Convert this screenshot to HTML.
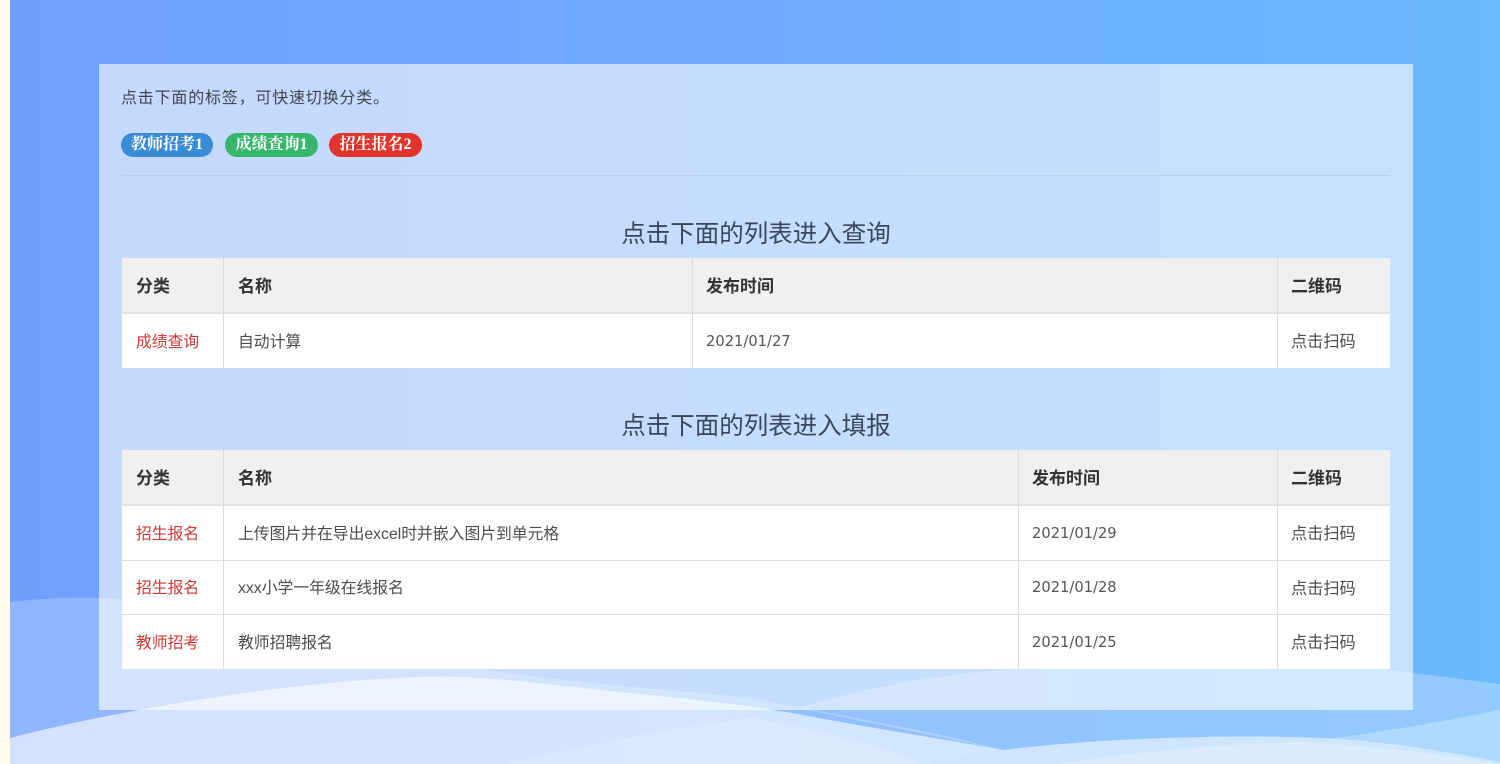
<!DOCTYPE html>
<html lang="zh">
<head>
<meta charset="utf-8">
<title>查询</title>
<style>
html,body{margin:0;padding:0;width:1500px;height:764px;overflow:hidden;background:#fffdf0}
body{position:relative;font-family:"Liberation Sans","Noto Sans CJK SC",sans-serif;color:#444}
#bg{position:absolute;left:10px;top:0;width:1490px;height:764px;background:linear-gradient(90deg,#6f9eff 0%,#6fa8ff 40%,#6cb9ff 100%)}
#waves{position:absolute;left:0;top:0}
#panel{position:absolute;left:99px;top:64px;width:1314px;height:646px;background:rgba(255,255,255,.6)}
.a{position:absolute;white-space:nowrap}
.intro{left:121px;top:89px;font-size:16px;line-height:20px;color:#3f4650;letter-spacing:.8px}
.tag{position:absolute;top:133px;height:24px;line-height:23px;border-radius:12px;color:#fff;font-weight:bold;font-size:16px;text-align:center;font-family:"Liberation Serif","Noto Serif CJK SC",serif}
hr{position:absolute;left:121px;top:175px;width:1269px;height:1px;margin:0;border:0;background:#b9cfe9}
.h{left:122px;width:1268px;text-align:center;font-size:24.5px;line-height:30px;color:#39475a}
.t{position:absolute;left:122px;width:1268px;background:#fff}
.r{position:absolute;left:0;width:100%;box-sizing:border-box;border-bottom:1px solid #dcdcdc}
.th{background:#f0f0f0;border-bottom:2px solid #e2e2e2}
.c{position:absolute;top:-1px;height:100%;display:flex;align-items:center;font-size:15.8px;color:#4c4c4c;white-space:nowrap}
.th .c{font-weight:bold;color:#333;font-size:17px;top:-1px}
.red{color:#cf3a34}
.q{font-size:16.2px}
.d{font-family:"DejaVu Sans",sans-serif;font-size:14.7px;color:#555;top:0}
.v{position:absolute;top:0;bottom:0;width:1px;background:#dcdcdc}
</style>
</head>
<body>
<div id="bg"></div>
<svg id="waves" width="1500" height="764" viewBox="0 0 1500 764">
  <path d="M10 602C60 596 120 595 190 606C300 624 400 650 478 668C570 684 680 690 750 698C830 714 930 730 1003 750L932 764H10Z" fill="#fff" opacity=".24"/>
  <path d="M798 708C870 686 950 672 1030 668C1180 660 1320 660 1413 673L1500 684V764H932L1003 750Z" fill="#fff" opacity=".26"/>
  <path d="M10 738C110 712 280 682 420 677C470 675 520 681 600 690C680 698 740 704 798 714C870 728 950 740 1003 750L932 764H10Z" fill="#fff" opacity=".6"/>
  <path d="M1003 750C1100 738 1240 733 1340 739C1410 745 1460 754 1500 762V764H932Z" fill="#fff" opacity=".55"/>
  <path d="M1327 739C1390 731 1450 720 1500 710V762C1460 754 1410 745 1327 739Z" fill="#fff" opacity=".28"/>
  <path d="M507 764C590 745 680 726 750 718C800 726 880 745 920 764Z" fill="#fff" opacity=".2"/>
  <path d="M1060 764C1130 752 1220 744 1300 742C1370 746 1440 754 1500 764Z" fill="#fff" opacity=".25"/>
</svg>
<div id="panel"></div>

<div class="a intro">点击下面的标签，可快速切换分类。</div>
<div class="tag" style="left:121px;width:92px;background:#3a8bd6">教师招考1</div>
<div class="tag" style="left:225px;width:93px;background:#38b56c">成绩查询1</div>
<div class="tag" style="left:329px;width:93px;background:#e2342d">招生报名2</div>
<hr>

<div class="a h" style="top:220px">点击下面的列表进入查询</div>
<div class="t" style="top:258px;height:110px">
  <div class="r th" style="top:0;height:56px">
    <div class="c" style="left:14px">分类</div>
    <div class="c" style="left:116px">名称</div>
    <div class="c" style="left:584px">发布时间</div>
    <div class="c" style="left:1169px">二维码</div>
  </div>
  <div class="r" style="top:56px;height:54px;border-bottom:0">
    <div class="c red" style="left:14px">成绩查询</div>
    <div class="c" style="left:116px">自动计算</div>
    <div class="c d" style="left:584px">2021/01/27</div>
    <div class="c q" style="left:1169px">点击扫码</div>
  </div>
  <div class="v" style="left:101px"></div>
  <div class="v" style="left:570px"></div>
  <div class="v" style="left:1155px"></div>
</div>

<div class="a h" style="top:412px">点击下面的列表进入填报</div>
<div class="t" style="top:450px;height:219px">
  <div class="r th" style="top:0;height:56px">
    <div class="c" style="left:14px">分类</div>
    <div class="c" style="left:116px">名称</div>
    <div class="c" style="left:910px">发布时间</div>
    <div class="c" style="left:1169px">二维码</div>
  </div>
  <div class="r" style="top:56px;height:55px">
    <div class="c red" style="left:14px">招生报名</div>
    <div class="c" style="left:116px">上传图片并在导出excel时并嵌入图片到单元格</div>
    <div class="c d" style="left:910px">2021/01/29</div>
    <div class="c q" style="left:1169px">点击扫码</div>
  </div>
  <div class="r" style="top:111px;height:54px">
    <div class="c red" style="left:14px">招生报名</div>
    <div class="c" style="left:116px">xxx小学一年级在线报名</div>
    <div class="c d" style="left:910px">2021/01/28</div>
    <div class="c q" style="left:1169px">点击扫码</div>
  </div>
  <div class="r" style="top:165px;height:54px;border-bottom:0">
    <div class="c red" style="left:14px">教师招考</div>
    <div class="c" style="left:116px">教师招聘报名</div>
    <div class="c d" style="left:910px">2021/01/25</div>
    <div class="c q" style="left:1169px">点击扫码</div>
  </div>
  <div class="v" style="left:101px"></div>
  <div class="v" style="left:896px"></div>
  <div class="v" style="left:1155px"></div>
</div>
</body>
</html>
